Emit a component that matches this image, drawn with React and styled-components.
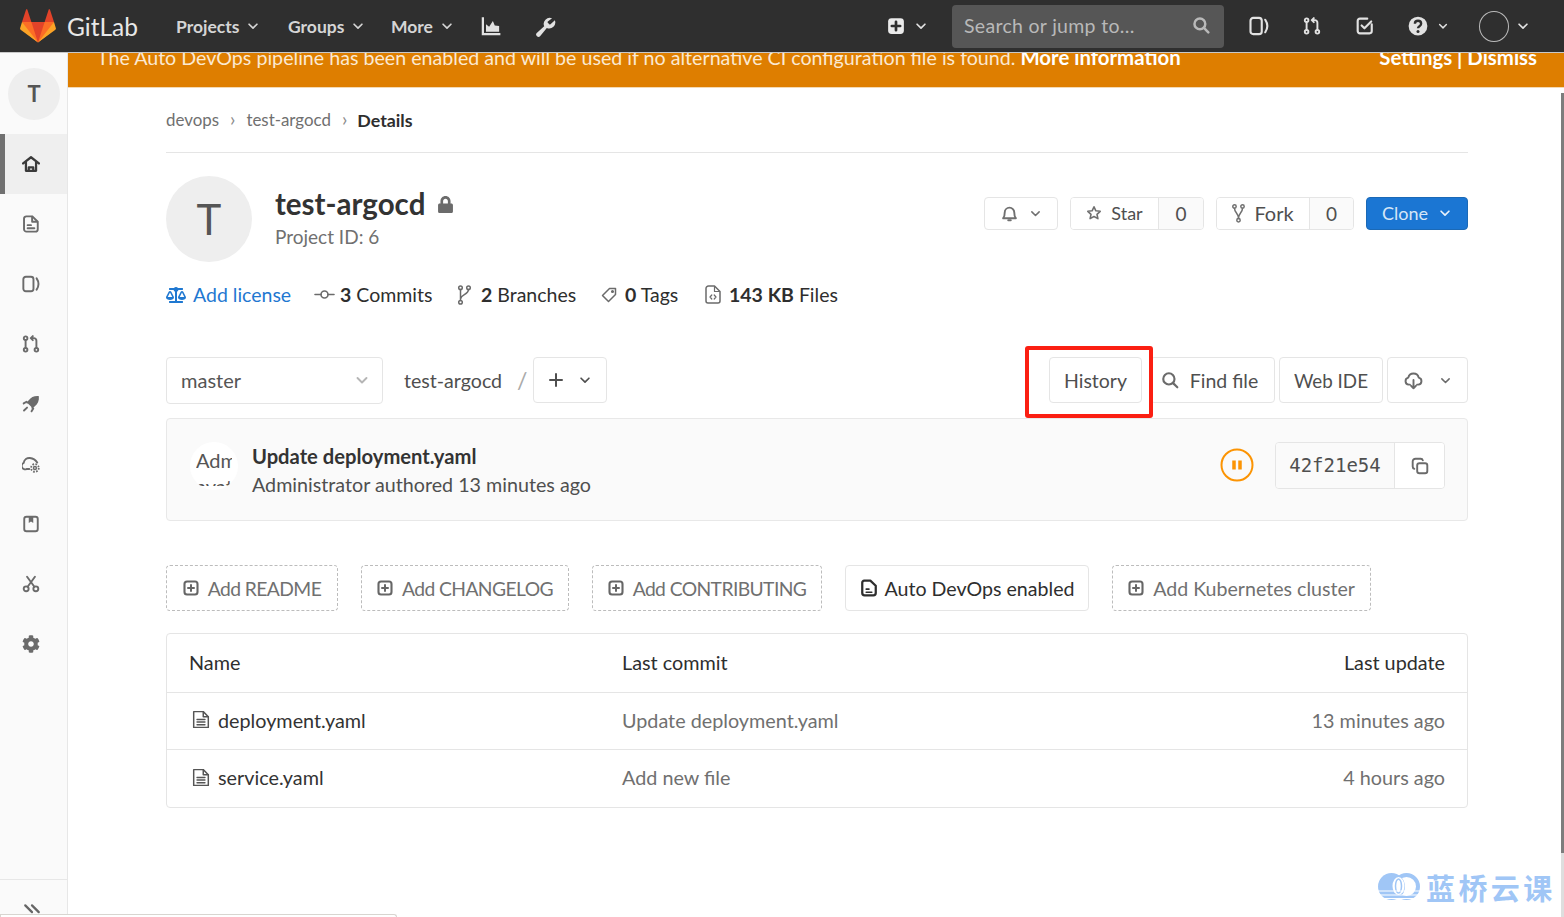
import React from 'react';
import styled, { createGlobalStyle } from 'styled-components';
import { FaCog, FaBalanceScale, FaLock } from 'react-icons/fa';

const Global = createGlobalStyle`
  html, body { margin: 0; padding: 0; background: #fff; }
  * { box-sizing: border-box; }
  body { font-family: Lato, "Noto Sans", sans-serif; color: #2e2e2e; }
`;
const Page = styled.div`position: relative; width: 1564px; height: 917px; overflow: hidden; display: flex; flex-direction: column; background: #fff;`;
const Svg = styled.svg`width: ${p => p.$s || 16}px; height: ${p => p.$h || p.$s || 16}px; flex: none; color: ${p => p.$c || 'inherit'}; display: block;`;
const I = ({ s, h, c, children, vb = '0 0 16 16', sw = 1.7 }) => (
  <Svg $s={s} $h={h} $c={c} viewBox={vb} fill="none" stroke="currentColor" strokeWidth={sw} strokeLinecap="round" strokeLinejoin="round">{children}</Svg>
);
const Chevron = ({ s = 14, c }) => <I s={s} c={c} sw={1.9}><path d="M3.5 6l4.5 4.5L12.5 6" /></I>;
const IssueIcon = p => <I {...p}><rect x="1.2" y="1.5" width="9" height="13" rx="2.2" /><path d="M13 3c2 3 2 7 0 10" /></I>;
const MrIcon = p => <I {...p}><circle cx="3.2" cy="2.8" r="1.6" /><circle cx="3.2" cy="13.2" r="1.6" /><circle cx="12.8" cy="13.2" r="1.6" /><path d="M3.2 4.6v6.800M12.8 11.400V5a2.200 2.200 0 0 0-2.200-2.200H8M9.600 1L7.800 2.800l1.800 1.800" /></I>;
const DocIcon = p => <I {...p}><path d="M3.800 1.200h5.400L14 6v6.600a2.200 2.200 0 0 1-2.200 2.200H4a2.200 2.200 0 0 1-2.200-2.200V3.200a2 2 0 0 1 2-2z" /><path d="M9 1.500V6h4.500M5 9h3M5 11.800h6" /></I>;
const PlusBox = ({ s = 16, c }) => <I s={s} c={c} sw={2.1}><rect x="1.500" y="1.500" width="13" height="13" rx="2.500" /><path d="M8 5v6M5 8h6" strokeWidth="2" /></I>;
const PlusSolid = ({ s = 18 }) => <I s={s} sw={2.4}><rect x="1" y="1" width="14" height="14" rx="3" fill="#eaeaea" stroke="none" /><path d="M8 4.300v7.400M4.300 8h7.400" stroke="#2e2e2e" /></I>;
const ForkIcon = () => <I s={13} h={19} vb="0 0 13 19" sw={1.5} c="#707070"><circle cx="2.500" cy="2.500" r="1.700" /><circle cx="10.500" cy="2.500" r="1.700" /><circle cx="6.500" cy="16.300" r="1.700" /><path d="M2.500 4.300c0 4.500 4 4.500 4 10.200M10.500 4.300c0 4.500-4 4.500-4 10.200" /></I>;
const BranchIcon = () => <I s={15} h={20} vb="0 0 15 20" sw={1.5} c="#6b6b6b"><circle cx="3.500" cy="2.700" r="1.800" /><circle cx="11.500" cy="2.700" r="1.800" /><circle cx="3.500" cy="17.300" r="1.800" /><path d="M3.500 4.600v10.800M11.500 4.600c0 5-7.500 5-7.800 9" /></I>;
const FileLines = () => <I s={18} h={19} sw={1.3} c="#555"><path d="M1.500 1h8.500L14.500 5.500V15H1.500z" /><path d="M10 1v4.500h4.500M4.500 8h7M4.500 10.300h7M4.500 12.600h7" /></I>;

const Header = styled.header`height: 53px; flex: none; background: #2f2f2f; border-bottom: 1px solid #c9c9c9; display: flex; align-items: center; justify-content: space-between; padding: 0 34px 0 20px; position: relative; z-index: 2; color: #dcdcdc;`;
const HeaderSide = styled.div`display: flex; align-items: center;`;
const Brand = styled.span`font-size: 24.5px; font-weight: 400; margin: 0 37px 0 11px; color: #e8e8e8; width: 72px; white-space: nowrap;`;
const NavItem = styled.span`display: flex; align-items: center; gap: 7px; font-size: 17.500px; font-weight: 700; width: ${p => p.$w}px; color: #d5d5d5; white-space: nowrap;`;
const IconSlot = styled.span`display: flex; align-items: center; gap: ${p => p.$g || 0}px; width: ${p => p.$w}px; color: #e2e2e2;`;
const Search = styled.div`width: 272px; height: 43px; background: #565656; border-radius: 4px; display: flex; align-items: center; justify-content: space-between; padding: 0 14px 2px 12px; margin: 0 25px 0 26px; font-size: 19.5px; color: #b9b9b9; letter-spacing: .3px;`;
const UserCircle = styled.span`width: 31px; height: 31px; border-radius: 50%; border: 1.5px solid #bbb; display: block;`;

const Body = styled.div`flex: 1; display: flex; min-height: 0;`;
const Sidebar = styled.aside`width: 68px; flex: none; background: #fafafa; border-right: 1px solid #e7e7e7; display: flex; flex-direction: column; color: #707070;`;
const SideHead = styled.div`height: 81px; flex: none; display: flex; align-items: center; justify-content: center; padding-left: 1px;`;
const SideAvatar = styled.div`width: 52px; height: 52px; border-radius: 50%; background: #eeeeee; display: flex; align-items: center; justify-content: center; font-size: 22px; font-weight: 700; color: #555;`;
const SideItem = styled.div`height: 60px; flex: none; display: flex; align-items: center; justify-content: center; padding-right: 10px; border-left: 5px solid ${p => p.$active ? '#707070' : 'transparent'}; background: ${p => p.$active ? '#efefef' : 'transparent'}; color: ${p => p.$active ? '#3a3a3a' : '#6b6b6b'};`;
const SideFoot = styled.div`margin-top: auto; height: 38px; border-top: 1px solid #e7e7e7; display: flex; justify-content: center; padding: 22px 4px 0 0; color: #666;`;

const Main = styled.main`flex: 1; min-width: 0; display: flex; flex-direction: column;`;
const Banner = styled.div`height: 35px; flex: none; overflow: hidden; background: #de7e00; border-bottom: 1px solid #f4d9b4; color: #fbe9d2; font-size: 19.65px; display: flex; justify-content: space-between; padding: 0 27px 0 29px; line-height: 20px;`;
const BannerText = styled.div`margin-top: -6px; white-space: nowrap; strong { font-weight: 700; color: #fff; font-size: 20.4px; }`;
const Container = styled.div`width: 1302px; margin-left: 98px;`;
const Crumbs = styled.nav`height: 65px; border-bottom: 1px solid #e5e5e5; display: flex; align-items: center; padding-bottom: 1px; font-size: 16.9px; color: #707070; gap: 11px; strong { color: #2e2e2e; font-weight: 700; font-size: 17.8px; margin-left: -1px; }`;
const Sep = styled.span`color: #8a8a8a; font-size: 19px; line-height: 1; padding-bottom: 3px;`;
const ProjectHead = styled.section`display: flex; justify-content: space-between; align-items: flex-start; padding-top: 23px; height: 126px;`;
const ProjectId = styled.div`display: flex;`;
const BigAvatar = styled.div`width: 86px; height: 86px; border-radius: 50%; background: #eeeeee; color: #555; font-size: 42px; display: flex; align-items: center; justify-content: center; margin-right: 23px;`;
const TitleCol = styled.div`display: flex; flex-direction: column; padding-top: 12px; gap: 5px;`;
const Title = styled.h1`margin: 0; font-size: 29.500px; line-height: 32px; font-weight: 700; color: #333; display: flex; align-items: center; gap: 12px;`;
const SubId = styled.div`font-size: 19px; line-height: 24px; color: #707070;`;
const HeadActions = styled.div`display: flex; gap: 12px; padding-top: 21px;`;
const Btn = styled.div`height: ${p => p.$h || 33}px; width: ${p => p.$w}px; background: ${p => p.$bg || '#fff'}; border: 1px solid ${p => p.$bd || '#e5e5e5'}; border-radius: 4px; display: flex; align-items: center; justify-content: center; gap: ${p => p.$g || 8}px; padding: 0 ${p => p.$pr || 0}px ${p => p.$h ? 0 : 1}px 0; font-size: ${p => p.$fs || 18}px; color: ${p => p.$c || '#4f4f4f'}; white-space: nowrap;`;
const Split = styled.div`display: flex; height: ${p => p.$h || 33}px; width: ${p => p.$w}px; margin-left: ${p => p.$ml || 0}px; border: 1px solid #e5e5e5; border-radius: 4px; overflow: hidden; background: ${p => p.$bg || '#fff'};`;
const SplitMain = styled.div`flex: 1; display: flex; align-items: center; justify-content: center; gap: 9px; padding-bottom: 1px; font-size: ${p => p.$fs || 18}px; color: #4f4f4f; background: ${p => p.$bg || '#fff'}; white-space: nowrap;`;
const SplitEnd = styled.div`width: ${p => p.$w}px; flex: none; display: flex; align-items: center; justify-content: center; border-left: 1px solid #e5e5e5; background: ${p => p.$bg || '#fafafa'}; font-size: 19px; color: #4f4f4f;`;

const Stats = styled.div`display: flex; align-items: center; height: 31px; font-size: 19.5px; color: #2e2e2e; strong { font-weight: 700; }`;
const Stat = styled.span`display: flex; align-items: center; gap: ${p => p.$g}px; width: ${p => p.$w}px; flex: none; color: ${p => p.$c || 'inherit'}; white-space: nowrap;`;
const StatIcon = styled.span`color: ${p => p.$c || '#6b6b6b'}; display: flex;`;

const Toolbar = styled.div`display: flex; justify-content: space-between; height: 47px; margin-top: 47px;`;
const ToolGroup = styled.div`display: flex; gap: ${p => p.$g || 0}px; align-items: flex-start;`;
const BranchSelect = styled.div`width: 217px; height: 47px; border: 1px solid #e5e5e5; border-radius: 4px; display: flex; align-items: center; justify-content: space-between; padding: 0 12px 2px 14px; font-size: 20px; color: #555;`;
const PathText = styled.span`font-size: 19.6px; line-height: 47px; color: #4f4f4f; margin-left: 21px;`;
const Slash = styled.span`font-size: 23px; line-height: 47px; color: #aaa; margin: 0 5px 0 15px;`;
const HistoryWrap = styled.div`position: relative; margin-right: 4px;
  &::after { content: ''; position: absolute; left: -24px; right: -11px; top: -11px; bottom: -15px; border: 4px solid #fb1f12; border-radius: 3px; pointer-events: none; }`;

const CommitBox = styled.div`margin-top: 14px; height: 103px; background: #fafafa; border: 1px solid #e8e8e8; border-radius: 4px; display: flex; align-items: flex-start; padding: 23px 22px 0 23px;`;
const AltAvatar = styled.div`width: 48px; height: 48px; border-radius: 50%; background: #fff; overflow: hidden; flex: none; font-size: 20px; line-height: 26px; padding-top: 5px; color: #555; margin-right: 14px; padding-left: 6px; white-space: nowrap;`;
const AltClip = styled.div`width: 36px; height: 39px; overflow: hidden;`;
const CommitInfo = styled.div`flex: 1; display: flex; flex-direction: column; gap: 5px; padding-top: 2px;`;
const CommitTitle = styled.div`font-size: 20.2px; line-height: 24px; font-weight: 700; color: #333;`;
const CommitSub = styled.div`font-size: 19.7px; line-height: 24px; color: #4f4f4f;`;
const PipelineSlot = styled.div`margin-top: 6px;`;
const Sha = styled.span`font-family: "DejaVu Sans Mono", "Liberation Mono", monospace; font-size: 19px; color: #4f4f4f;`;

const Shortcuts = styled.div`display: flex; gap: 23px; margin-top: 44px;`;
const Shortcut = styled.div`height: 46px; width: ${p => p.$w}px; border: 1px ${p => p.$solid ? 'solid #e5e5e5' : 'dashed #bcbcbc'}; border-radius: 4px; display: flex; align-items: center; justify-content: center; gap: ${p => p.$solid ? 7 : 9}px; font-size: ${p => p.$caps ? 19.3 : 19.6}px; letter-spacing: ${p => p.$caps ? -0.6 : 0}px; color: ${p => p.$solid ? '#2e2e2e' : '#707070'}; white-space: nowrap; svg { color: ${p => p.$solid ? '#2e2e2e' : '#666'}; }`;

const Table = styled.div`margin-top: 22px; border: 1px solid #e5e5e5; border-radius: 4px; font-size: 19.8px;`;
const Row = styled.div`display: grid; grid-template-columns: 433px 1fr 300px; align-items: center; height: ${p => p.$h}px; padding: 0 22px 3px; border-top: ${p => p.$first ? 'none' : '1px solid #e5e5e5'};`;
const NameCell = styled.div`display: flex; align-items: center; gap: 8px; color: ${p => p.$head ? '#2e2e2e' : '#333'}; padding-left: ${p => p.$head ? 0 : 3}px;`;
const MsgCell = styled.div`color: ${p => p.$head ? '#2e2e2e' : '#707070'};`;
const DateCell = styled.div`text-align: right; color: ${p => p.$head ? '#2e2e2e' : '#707070'};`;

const ScrollThumb = styled.div`position: absolute; right: 0; top: 93px; width: 3px; height: 760px; background: #7d7d7d;`;
const ScrollTrack = styled.div`position: absolute; right: 0; top: 853px; width: 3px; bottom: 0; background: #dedede;`;
const PopStrip = styled.div`position: absolute; left: 0; bottom: 0; width: 397px; height: 3px; background: #fff; border: 1px solid #d8d5d0; border-bottom: none; border-radius: 0 3px 0 0; z-index: 3;`;
const Watermark = styled.div`position: absolute; left: 1378px; top: 870px; display: flex; align-items: center; gap: 6px; color: #a0c6f6; font-family: "Noto Sans CJK SC", sans-serif; font-weight: 700; font-size: 29px; line-height: 34px; letter-spacing: 3.4px; white-space: nowrap; z-index: 4;`;

const Logo = () => (
  <Svg $s={36} viewBox="0 0 36 36">
    <path fill="#e24329" d="M2 14l9.38 9v-9l-4-12.28c-.205-.632-1.176-.632-1.38 0z" />
    <path fill="#e24329" d="M34 14l-9.38 9v-9l4-12.28c.205-.632 1.176-.632 1.38 0z" />
    <path fill="#e24329" d="M18,34.38 3,14 33,14 Z" />
    <path fill="#fc6d26" d="M18,34.38 11.38,14 2,14 6,25Z" />
    <path fill="#fc6d26" d="M18,34.38 24.62,14 34,14 30,25Z" />
    <path fill="#fca326" d="M2 14L.1 20.16c-.18.565 0 1.2.5 1.56l17.42 12.66z" />
    <path fill="#fca326" d="M34 14l1.9 6.16c.18.565 0 1.2-.5 1.56L18 34.38z" />
  </Svg>
);

const WaterLogo = () => (
  <Svg $s={42} $h={30} viewBox="0 0 42 30">
    <circle cx="13.5" cy="14.5" r="13.5" fill="#a0c6f6" />
    <circle cx="28.5" cy="14.5" r="11.5" fill="none" stroke="#a0c6f6" strokeWidth="4" />
    <ellipse cx="20.5" cy="14" rx="6" ry="9" fill="#fff" />
    <ellipse cx="20.5" cy="14" rx="3" ry="7" fill="none" stroke="#a0c6f6" strokeWidth="1.5" />
    <path d="M0 19h42M0 23h42M0 26.5h42" stroke="#fff" strokeWidth="1.2" />
  </Svg>
);

const sideIcons = [
  <I s={18} sw={2}><path d="M1 7.500L8 2l7 5.500M3.500 6.500V14h9V6.500M6 14v-3h4v3" /></I>,
  <DocIcon s={18} />,
  <IssueIcon s={18} />,
  <MrIcon s={18} />,
  <I s={18}><path fill="currentColor" stroke="none" d="M15 1c-4-.4-7 1-9 3.600L3.400 7.200l2.100.6 2.700 2.700.6 2.100 2.600-2.600C13.900 8 15.400 5 15 1z" /><path d="M1.500 7.500L4 6M8.500 14.500L10 12M1.800 13.800l2.700-2.600" /></I>,
  <I s={18}><path d="M6.500 12.500H4A3 3 0 0 1 1.500 7c.5-3 3-4.500 5.500-4.300 2.500.2 5 1.500 6.500 4" /><circle cx="11.500" cy="11.500" r="1.300" strokeWidth="1.300" /><circle cx="11.500" cy="11.500" r="3.400" strokeDasharray="1.500 1.170" strokeWidth="1.600" strokeLinecap="butt" /></I>,
  <I s={18}><rect x="2" y="1.500" width="12" height="13" rx="2" /><path fill="currentColor" stroke="none" d="M6 1.500h4V7L8 5.800 6 7z" /></I>,
  <I s={18}><circle cx="3.700" cy="12.300" r="2.200" /><circle cx="12.300" cy="12.300" r="2.200" /><path d="M5 10.500L11.500 1.500M11 10.500L4.500 1.500" /></I>,
  <FaCog size={18} />,
];

export default function App() {
  return (
    <Page>
      <Global />
      <Header>
        <HeaderSide>
          <Logo />
          <Brand>GitLab</Brand>
          <NavItem $w={112}>Projects <Chevron /></NavItem>
          <NavItem $w={103}>Groups <Chevron /></NavItem>
          <NavItem $w={90}>More <Chevron /></NavItem>
          <IconSlot $w={54}>
            <Svg $s={20} viewBox="0 0 16 16"><path fill="none" stroke="currentColor" strokeWidth="1.800" d="M1.500 1v13.500H15.500" /><path fill="currentColor" d="M4 12.500V6.500l2.500 2 3-4.500 1.500 3.500 3.500.5v4.500z" /></Svg>
          </IconSlot>
          <IconSlot $w={20}>
            <Svg $s={21} viewBox="0 0 24 24"><path fill="currentColor" d="M14.700 6.300a1 1 0 0 0 0 1.400l1.600 1.600a1 1 0 0 0 1.400 0l5-4.500a7 7 0 0 1-9.200 9l-7.500 9a2.600 2.600 0 0 1-4-3.500l8.500-7.500a7 7 0 0 1 9-9.200z" /></Svg>
          </IconSlot>
        </HeaderSide>
        <HeaderSide>
          <IconSlot $w={39} $g={9}><PlusSolid /><Chevron /></IconSlot>
          <Search>
            <span>Search or jump to…</span>
            <I s={18} sw={2.200}><circle cx="7" cy="7" r="4.800" /><path d="M10.800 10.800L14.500 14.500" /></I>
          </Search>
          <IconSlot $w={54}><IssueIcon s={20} /></IconSlot>
          <IconSlot $w={53}><MrIcon s={18} /></IconSlot>
          <IconSlot $w={52}><I s={18} sw={1.900}><path d="M14 6.500V12.500a2 2 0 0 1-2 2H3.500a2 2 0 0 1-2-2V3.500a2 2 0 0 1 2-2H10" /><path d="M5 7.500l2.500 2.500 6-6" /></I></IconSlot>
          <IconSlot $w={71} $g={9}>
            <Svg $s={20} viewBox="0 0 16 16"><circle cx="8" cy="8" r="7.500" fill="#e2e2e2" /><path d="M5.500 6.200c0-3.200 5-3.200 5 0 0 2-2.500 1.800-2.500 3.500" fill="none" stroke="#2f2f2f" strokeWidth="1.900" /><circle cx="8" cy="12.300" r="1.200" fill="#2f2f2f" /></Svg>
            <Chevron s={12} />
          </IconSlot>
          <IconSlot $w={51} $g={7}><UserCircle /><Chevron /></IconSlot>
        </HeaderSide>
      </Header>
      <Body>
        <Sidebar>
          <SideHead><SideAvatar>T</SideAvatar></SideHead>
          {sideIcons.map((ic, i) => <SideItem key={i} $active={i === 0}>{ic}</SideItem>)}
          <SideFoot><I s={18} sw={2}><path d="M2 3l6 6M8 3l6 6" /></I></SideFoot>
        </Sidebar>
        <Main>
          <Banner>
            <BannerText>The Auto DevOps pipeline has been enabled and will be used if no alternative CI configuration file is found. <strong>More information</strong></BannerText>
            <BannerText><strong>Settings | Dismiss</strong></BannerText>
          </Banner>
          <Container>
            <Crumbs>
              <span>devops</span><Sep>›</Sep><span>test-argocd</span><Sep>›</Sep><strong>Details</strong>
            </Crumbs>
            <ProjectHead>
              <ProjectId>
                <BigAvatar>T</BigAvatar>
                <TitleCol>
                  <Title>test-argocd <StatIcon><FaLock size={17} /></StatIcon></Title>
                  <SubId>Project ID: 6</SubId>
                </TitleCol>
              </ProjectId>
              <HeadActions>
                <Btn $w={74} $g={11}>
                  <I s={17} sw={1.800} c="#707070"><path d="M2 12.500h12c-1.500-1.500-1.500-3-1.500-5.500a4.500 4.500 0 0 0-9 0c0 2.500 0 4-1.500 5.500z" /><path d="M6.800 14.300h2.400" /></I>
                  <Chevron s={13} c="#707070" />
                </Btn>
                <Split $w={134}>
                  <SplitMain><I s={16} sw={1.600} c="#707070"><path d="M8 1.800l1.900 4 4.300.5-3.200 3 .9 4.300L8 11.500l-3.900 2.100.9-4.300-3.200-3 4.300-.5z" /></I>Star</SplitMain>
                  <SplitEnd $w={45}>0</SplitEnd>
                </Split>
                <Split $w={138}>
                  <SplitMain $fs={20}><ForkIcon />Fork</SplitMain>
                  <SplitEnd $w={44}>0</SplitEnd>
                </Split>
                <Btn $w={102} $bg="#1b76d3" $bd="#1b69b6" $c="#d6e6f7" $g={10}>Clone <Chevron s={14} c="#e8f1fb" /></Btn>
              </HeadActions>
            </ProjectHead>
            <Stats>
              <Stat $w={148} $g={7} $c="#1f78d1"><StatIcon $c="#1f78d1"><FaBalanceScale size={20} /></StatIcon>Add license</Stat>
              <Stat $w={143} $g={5}><I s={21} sw={1.600} c="#6b6b6b" vb="0 0 21 16"><circle cx="10.500" cy="8" r="3.500" /><path d="M1 8h6M14 8h6" /></I><span><strong>3</strong> Commits</span></Stat>
              <Stat $w={144} $g={9}><BranchIcon /><span><strong>2</strong> Branches</span></Stat>
              <Stat $w={104} $g={8}><I s={16} sw={1.500} c="#6b6b6b"><path d="M8.500 1.500H14.500V7.500L7.500 14.500 1.500 8.500z" /><circle cx="11.500" cy="4.500" r=".8" /></I><span><strong>0</strong> Tags</span></Stat>
              <Stat $w={140} $g={8}><I s={16} h={19} vb="0 0 16 19" sw={1.500} c="#6b6b6b"><path d="M3.500 1h6L15 6.500v9.500a2 2 0 0 1-2 2H3a2 2 0 0 1-2-2V3.500a2.500 2.500 0 0 1 2.500-2.500z" /><path d="M9.500 1.500V6.500h5M6.800 10L5 12l1.800 2M9.200 10l1.800 2-1.800 2" strokeWidth="1.200" /></I><span><strong>143 KB</strong> Files</span></Stat>
            </Stats>
            <Toolbar>
              <ToolGroup>
                <BranchSelect>master <Chevron s={16} c="#b5b5b5" /></BranchSelect>
                <PathText>test-argocd</PathText>
                <Slash>/</Slash>
                <Btn $w={74} $h={46} $g={14} $c="#4f4f4f">
                  <I s={16} sw={2}><path d="M8 2v12M2 8h12" /></I>
                  <Chevron s={14} />
                </Btn>
              </ToolGroup>
              <ToolGroup $g={4}>
                <HistoryWrap><Btn $w={93} $h={46} $fs={19.500}>History</Btn></HistoryWrap>
                <Btn $w={125} $h={46} $fs={19.500} $g={11} $pr={6}><I s={18} sw={1.900} c="#6b6b6b"><circle cx="7" cy="7" r="5" /><path d="M11 11l3.500 3.500" /></I>Find file</Btn>
                <Btn $w={104} $h={46} $fs={18.800}>Web IDE</Btn>
                <Btn $w={81} $h={46} $g={16}>
                  <I s={19} sw={1.600} c="#6b6b6b"><path d="M5 11.500H4a3 3 0 0 1-.4-5.900 4.500 4.500 0 0 1 8.800 0A3 3 0 0 1 12 11.500h-1M8 7.500v7M6 12.500l2 2 2-2" /></I>
                  <Chevron s={13} c="#6b6b6b" />
                </Btn>
              </ToolGroup>
            </Toolbar>
            <CommitBox>
              <AltAvatar><AltClip>Admin<br />avatar</AltClip></AltAvatar>
              <CommitInfo>
                <CommitTitle>Update deployment.yaml</CommitTitle>
                <CommitSub>Administrator authored 13 minutes ago</CommitSub>
              </CommitInfo>
              <PipelineSlot>
                <I s={34} sw={2} c="#fc9403" vb="0 0 34 34"><circle cx="17" cy="17" r="15.500" /><path d="M14 12.500v9M20 12.500v9" strokeWidth="3.500" strokeLinecap="butt" /></I>
              </PipelineSlot>
              <Split $w={170} $h={47} $ml={21} $bg="#fafafa">
                <SplitMain $bg="#fafafa"><Sha>42f21e54</Sha></SplitMain>
                <SplitEnd $w={50} $bg="#fff">
                  <I s={18} sw={1.700} c="#6b6b6b"><path d="M10.500 3A2 2 0 0 0 8.500 1.500H4a2.500 2.500 0 0 0-2.500 2.500v4.500A2 2 0 0 0 3 10.500" /><rect x="5.500" y="5.500" width="9" height="9" rx="2" /></I>
                </SplitEnd>
              </Split>
            </CommitBox>
            <Shortcuts>
              <Shortcut $w={172} $caps><PlusBox />Add README</Shortcut>
              <Shortcut $w={208} $caps><PlusBox />Add CHANGELOG</Shortcut>
              <Shortcut $w={230} $caps><PlusBox />Add CONTRIBUTING</Shortcut>
              <Shortcut $w={244} $solid>
                <I s={18} sw={2}><path d="M3.800 1.500h5.400L14 6v6.500a2 2 0 0 1-2 2H4a2 2 0 0 1-2-2V3.300a2 2 0 0 1 1.800-1.800z" /><path d="M5.500 9h2.500M5.500 11.800h5" strokeWidth="1.400" /></I>
                Auto DevOps enabled
              </Shortcut>
              <Shortcut $w={259}><PlusBox />Add Kubernetes cluster</Shortcut>
            </Shortcuts>
            <Table>
              <Row $first $h={58}>
                <NameCell $head>Name</NameCell><MsgCell $head>Last commit</MsgCell><DateCell $head>Last update</DateCell>
              </Row>
              <Row $h={57}>
                <NameCell><FileLines />deployment.yaml</NameCell><MsgCell>Update deployment.yaml</MsgCell><DateCell>13 minutes ago</DateCell>
              </Row>
              <Row $h={58}>
                <NameCell><FileLines />service.yaml</NameCell><MsgCell>Add new file</MsgCell><DateCell>4 hours ago</DateCell>
              </Row>
            </Table>
          </Container>
        </Main>
      </Body>
      <ScrollThumb />
      <ScrollTrack />
      <PopStrip />
      <Watermark><WaterLogo />蓝桥云课</Watermark>
    </Page>
  );
}
